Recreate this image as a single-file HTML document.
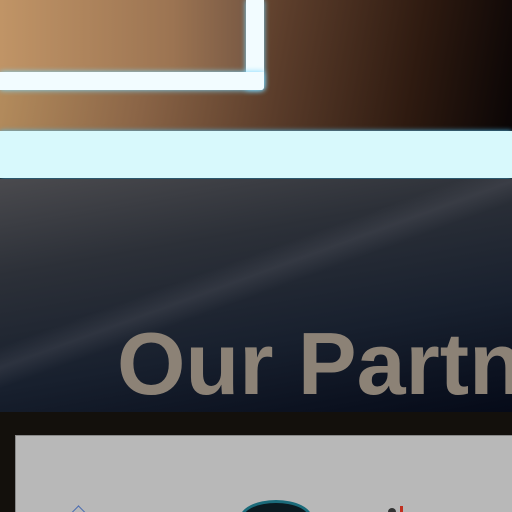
<!DOCTYPE html>
<html><head><style>
html,body{margin:0;width:512px;height:512px;overflow:hidden}
#w{position:relative;width:512px;height:512px;overflow:hidden;background:#111;font-family:"Liberation Sans",sans-serif}
#w div{position:absolute}
</style></head><body><div id="w">
<div style="left:0;top:0;width:512px;height:131px;background:linear-gradient(100deg,#b8905f 0%,#8a6446 30%,#5a3c2a 55%,#2e1a10 80%,#0a0505 100%)"></div>
<div style="left:0;top:0;width:246px;height:72px;background:linear-gradient(90deg,#c09466,#9c7452 70%,#7a5a44)"></div>
<div style="left:246px;top:0;width:18px;height:90px;background:#f2fcff;box-shadow:0 0 6px #7ad8ff;border-radius:0 0 3px 0"></div>
<div style="left:0;top:72px;width:264px;height:18px;background:#f2fcff;box-shadow:0 0 6px #7ad8ff;border-radius:0 0 3px 0"></div>
<div style="left:0;top:131px;width:512px;height:47px;background:#d8f9fc;box-shadow:0 0 5px #4fb8e8"></div>
<div style="left:0;top:179px;width:512px;height:233px;background:linear-gradient(170deg,#4a4a4e 0%,#2c3038 30%,#18202e 65%,#050a18 100%)"></div>
<div style="left:0;top:179px;width:512px;height:233px;background:linear-gradient(160deg,transparent 40%,rgba(120,120,130,.18) 45%,transparent 50%)"></div>
<div style="left:117px;top:314px;font-size:88px;font-weight:bold;color:#8c8276;white-space:nowrap;line-height:100px">Our Partners</div>
<div style="left:0;top:412px;width:512px;height:100px;background:#13100c"></div>
<div style="left:15px;top:435px;width:497px;height:77px;background:#b8b8b8;border-top:1px solid #888;border-left:1px solid #888"></div>
<div style="left:240px;top:500px;width:66px;height:30px;border-radius:50%;background:#0b1a20;border:3px solid #1b6b7a"></div>
<div style="left:72px;top:508px;width:12px;height:12px;border:1px solid #4a6ab0;border-right:none;border-bottom:none;transform:rotate(45deg)"></div>
<div style="left:388px;top:508px;width:8px;height:8px;border-radius:50%;background:#333"></div>
<div style="left:400px;top:506px;width:3px;height:6px;background:#c03020"></div>
</div></body></html>
